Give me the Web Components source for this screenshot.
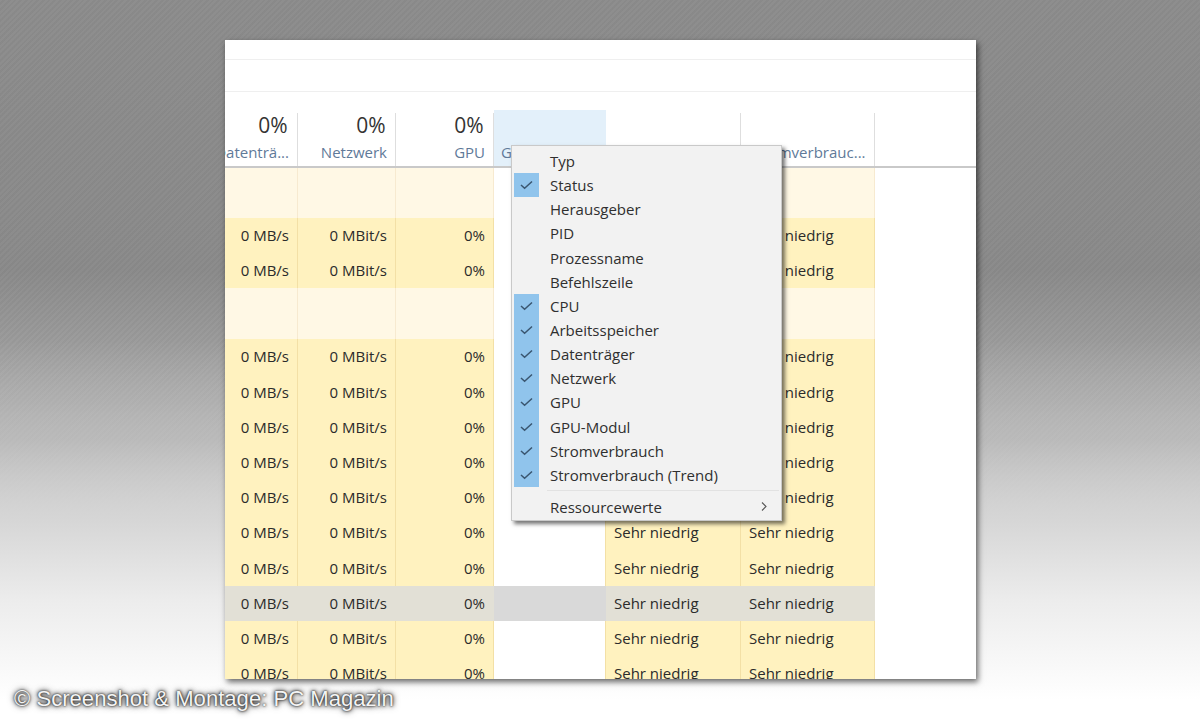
<!DOCTYPE html>
<html><head><meta charset="utf-8"><style>
html,body{margin:0;height:720px;overflow:hidden}
body{font-family:"Open Sans","Noto Sans",sans-serif}
</style></head><body>
<tm-stage>
<tm-window>
<tm-strip style="--h:19px"></tm-strip>
<tm-strip style="--h:31px"></tm-strip>
<tm-table></tm-table>
<tm-menu></tm-menu>
</tm-window>
<span slot="credit">© Screenshot &amp; Montage: PC Magazin</span>
</tm-stage>
<script>
class Stage extends HTMLElement{constructor(){super();this.attachShadow({mode:'open'}).innerHTML=`<style>
:host{display:flex;flex-direction:column;width:1200px;height:720px;box-sizing:border-box;padding:40px 224px 0 225px;
background:linear-gradient(180deg,rgba(176,176,176,0) 340px,rgba(190,190,190,.6) 440px,#d6d6d6 520px,#ececec 600px,#fff 700px),repeating-linear-gradient(135deg,rgba(255,255,255,.018) 0 2px,rgba(0,0,0,.018) 2px 4px),linear-gradient(180deg,#8c8c8c 0,#8a8a8a 270px,#a8a8a8 400px,#cbcbcb 500px,#ebebeb 600px,#fff 700px)}
.c{margin:1px 0 0 -211px;height:38px;display:flex;align-items:center;font:22.1px "Liberation Sans",sans-serif;color:#f4f4f4;text-shadow:0 0 2px #111,0 0 4px #333,0 0 7px #444}
</style><slot></slot><div class="c"><slot name="credit"></slot></div>`}}
class Win extends HTMLElement{constructor(){super();this.attachShadow({mode:'open'}).innerHTML=`<style>
:host{display:flex;flex-direction:column;position:relative;height:639px;flex:none;background:#fff;box-shadow:2px 3px 6px rgba(0,0,0,.6)}
.clip{height:639px;overflow:hidden;display:flex;flex-direction:column}
</style><div class="clip"><slot></slot></div>`}}
class Strip extends HTMLElement{constructor(){super();this.attachShadow({mode:'open'}).innerHTML=`<style>
:host{display:block;height:var(--h);flex:none;border-bottom:1px solid #efefef}
</style>`}}
const cols=[73,98,98,112,135,134];
class Table extends HTMLElement{constructor(){super();
const heads=[['0%','Datenträ...'],['0%','Netzwerk'],['0%','GPU'],['','GPU-Modul'],['','Stromverbrauch'],['','Stromverbrauc...']];
const hd=heads.map((h,i)=>`<div class="h h${i}"><span class="p">${h[0]}</span><span class="l">${h[1]}</span></div>`).join('');
const tpl=cols.map(c=>c+'px').join(' ');
const row=cls=>{
 const sn='<span>Sehr niedrig</span>';
 return `<div class="row ${cls}"><div class="c y r"><span>0 MB/s</span></div><div class="c y r"><span>0 MBit/s</span></div><div class="c y r"><span>0%</span></div><div class="c w"></div><div class="c y">${sn}</div><div class="c y">${sn}</div></div>`};
const pale=h=>`<div class="row pale" style="height:${h}px"><div class="c y"></div><div class="c y"></div><div class="c y"></div><div class="c w"></div><div class="c y"></div><div class="c y"></div></div>`;
let b=pale(50)+row('')+row('')+pale(51);
for(let i=0;i<7;i++)b+=row('');
b+=row('sel');b+=row('');b+=row('');
this.attachShadow({mode:'open'}).innerHTML=`<style>
:host{display:block;flex:none;font-size:15px;color:#2b2b2b}
.head{display:grid;grid-template-columns:${tpl};height:58px;margin-top:18px;box-sizing:border-box;border-bottom:2px solid #c9c9c9;width:751px}
.h{display:flex;flex-direction:column;align-items:flex-end;justify-content:flex-end;padding:0 8px 4px 0;border-right:1px solid #dedede;box-sizing:border-box;margin-top:3px;white-space:nowrap;overflow:hidden}
.h3{margin-top:0;background:#e3f0fa;border-right:0;align-items:flex-start;padding-left:7px}
.h5{align-items:flex-start;padding-left:8px}
.p{font-size:21px;line-height:24px;color:#333;margin:0 1.5px 5px 0;height:24px}
.l{font-size:15px;line-height:20px;color:#5f7a99}
.row{display:grid;grid-template-columns:${tpl};height:35.2px;width:650px}
.c{box-sizing:border-box;border-right:1px solid #f3e0a6;background:#fff2bf;display:flex;align-items:center;padding:0 8px 1px;white-space:nowrap}
.pale .c{background:#fff8e5;border-right-color:#f7ead0}
.r{justify-content:flex-end}
.row .w{background:#fff;border-right:1px solid #f3e0a6}
.pale .w{border-right-color:#f7ead0}
.sel .c{background:#e2e0d6;border-right-color:transparent}
.sel .w{background:#d9d9d9;border-right-color:transparent}
</style><div class="head">${hd}</div>${b}`}}
class Menu extends HTMLElement{constructor(){super();
const it=[['Typ',0],['Status',1],['Herausgeber',0],['PID',0],['Prozessname',0],['Befehlszeile',0],['CPU',1],['Arbeitsspeicher',1],['Datenträger',1],['Netzwerk',1],['GPU',1],['GPU-Modul',1],['Stromverbrauch',1],['Stromverbrauch (Trend)',1]];
const ck='<svg width="13" height="10" viewBox="0 0 13 10"><path d="M1 5 4.6 8.3 12 1.5" fill="none" stroke="#3a5670" stroke-width="1.5"/></svg>';
this.attachShadow({mode:'open'}).innerHTML=`<style>
:host{position:absolute;left:286px;top:105px;width:271px;height:376px;box-sizing:border-box;background:#f2f2f2;border:1px solid #c9c9c9;box-shadow:3px 3px 4px rgba(0,0,0,.55);padding:3px 2px 2px;display:block;font-size:15px;color:#2f2f2f}
.i{display:flex;height:24.15px;align-items:center}
.g{width:25px;height:100%;flex:none;display:flex;align-items:center;justify-content:center;margin-right:11px}
.on{background:#90c4ec}
.sep{height:1px;background:#e2e2e2;margin:3px 0 3px 33px}
.sub{height:26px;justify-content:space-between;padding-right:11px}
.l{display:flex;align-items:center;height:100%}
</style>${it.map(([t,c])=>`<div class="i"><div class="g ${c?'on':''}">${c?ck:''}</div><span>${t}</span></div>`).join('')}
<div class="sep"></div>
<div class="i sub"><div class="l"><div class="g"></div><span>Ressourcewerte</span></div><svg width="8" height="11" viewBox="0 0 8 11"><path d="M2 1.5 6 5.5 2 9.5" fill="none" stroke="#555" stroke-width="1.1"/></svg></div>`}}
customElements.define('tm-stage',Stage);customElements.define('tm-window',Win);customElements.define('tm-strip',Strip);customElements.define('tm-table',Table);customElements.define('tm-menu',Menu);
</script>
</body></html>
